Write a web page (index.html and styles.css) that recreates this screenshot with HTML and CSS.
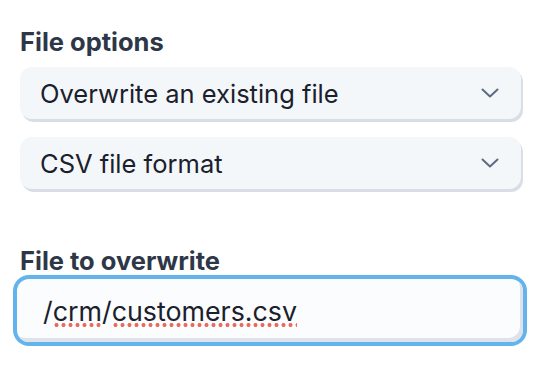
FILE: index.html
```html
<html>
<head>
<title>File options</title>
<link rel="stylesheet" href="styles.css">
</head>
<body>
<div id="container">
<div class="field">
<div class="field-label">File options</div>
<div class="select">
<span>Overwrite an existing file</span>
<svg class="chevron" width="18" height="10" viewBox="0 0 18 10"><path d="M1.5 1.5 L9 8.5 L16.5 1.5" fill="none" stroke="#5b6b84" stroke-width="2" stroke-linecap="round" stroke-linejoin="round"/></svg>
</div>
<div class="select">
<span>CSV file format</span>
<svg class="chevron" width="18" height="10" viewBox="0 0 18 10"><path d="M1.5 1.5 L9 8.5 L16.5 1.5" fill="none" stroke="#5b6b84" stroke-width="2" stroke-linecap="round" stroke-linejoin="round"/></svg>
</div>
</div>
<div class="field field-gap">
<div class="field-label">File to overwrite</div>
<div class="text-input focused">/<span class="misspelt">crm</span>/<span class="misspelt">customers.csv</span></div>
</div>
</div>
</body>
</html>
```

FILE: styles.css
```css
body {
margin:0;
background-color:#fff;
}
#container {
padding:27px 33px 0 20px;
font-family:Inter, "Noto Sans", sans-serif;
}
.field-label {
font-size:25.5px;
line-height:30px;
font-weight:700;
color:#2d3748;
margin-bottom:10px;
}
.field-gap {
margin-top:57px;
}
.field-gap .field-label {
margin-bottom:3px;
}
.select {
display:flex;
align-items:center;
justify-content:space-between;
height:52px;
padding:0 22px 0 20px;
margin-bottom:18px;
background-color:#f4f7fa;
border-radius:12px;
box-shadow:2px 3px 0 #d9dee6;
font-size:25.5px;
color:#1a202c;
}
.chevron {
display:block;
}
.text-input {
display:flex;
align-items:center;
height:63px;
margin-left:-3px;
margin-right:-2px;
padding:0 20px 0 26px;
background-color:#fbfcfd;
border-radius:12px;
font-size:26.8px;
color:#1a202c;
box-shadow:inset -3px -4px 0 #dfe2e8;
}
.text-input.focused {
box-shadow:inset -3px -4px 0 #dfe2e8, 0 0 0 4px #63b3ed;
}
.misspelt {
background:radial-gradient(circle at 3.5px 2px, #ec6a5c 1.7px, transparent 2.3px) repeat-x left bottom / 7px 4px;
}
```
